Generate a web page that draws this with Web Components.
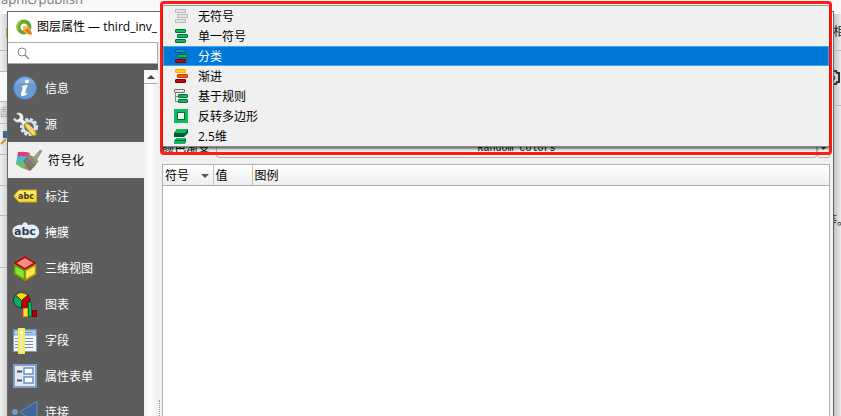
<!DOCTYPE html>
<html lang="zh-CN">
<head>
<meta charset="utf-8">
<title>图层属性</title>
<style>
  html, body { margin: 0; height: 100%; }
  body {
    overflow: hidden;
    font: 12px/20px "Open Sans", "Noto Sans CJK SC", sans-serif;
    color: #000;
  }
</style>
</head>
<body>
<desktop-scene>
  <backdrop-app slot="back"></backdrop-app>
  <dialog-window heading="图层属性 — third_inv_">
    <side-panel slot="side">
      <side-item icon="info">信息</side-item>
      <side-item icon="source">源</side-item>
      <side-item icon="brush" selected>符号化</side-item>
      <side-item icon="label">标注</side-item>
      <side-item icon="mask">掩膜</side-item>
      <side-item icon="cube">三维视图</side-item>
      <side-item icon="chart">图表</side-item>
      <side-item icon="fields">字段</side-item>
      <side-item icon="form">属性表单</side-item>
      <side-item icon="join">连接</side-item>
    </side-panel>
    <ramp-field></ramp-field>
    <symbol-table></symbol-table>
  </dialog-window>
  <renderer-menu slot="popup">
    <renderer-option icon="none">无符号</renderer-option>
    <renderer-option icon="single">单一符号</renderer-option>
    <renderer-option icon="category" selected>分类</renderer-option>
    <renderer-option icon="graduated">渐进</renderer-option>
    <renderer-option icon="rules">基于规则</renderer-option>
    <renderer-option icon="inverted">反转多边形</renderer-option>
    <renderer-option icon="extrude">2.5维</renderer-option>
  </renderer-menu>
</desktop-scene>

<script>
const bars = (a, b, c) => `
  <g stroke-width="1">
    <rect x="1.5" y="1.5" width="10" height="3" rx=".5" fill="${a[0]}" stroke="${a[1]}"/>
    <rect x="3.5" y="6.5" width="10" height="3" rx=".5" fill="${b[0]}" stroke="${b[1]}"/>
    <rect x="1.5" y="11.5" width="10" height="3" rx=".5" fill="${c[0]}" stroke="${c[1]}"/>
  </g>`;

const green = ['#0bbb5c', '#00703a'];

const menuIcons = {
  none: `<g fill="#e4e4e4" stroke="#888" stroke-dasharray="1 1">
      <rect x="1.5" y="1.5" width="10" height="3"/>
      <rect x="3.5" y="6.5" width="10" height="3"/>
      <rect x="1.5" y="11.5" width="10" height="3"/></g>`,
  single: bars(green, green, green),
  category: bars(['#00a4b8', '#0b50a8'], green, ['#b80d0d', '#760000']),
  graduated: bars(['#ffd800', '#ffa800'], ['#ff5a00', '#d93600'], ['#b80d0d', '#760000']),
  rules: `<path d="M1.5 5v9M1.5 8.5h3M1.5 13.5h3" stroke="#888" fill="none"/>
    <rect x=".5" y="1.5" width="10" height="3" rx=".5" fill="#e6e6e6" stroke="#777"/>
    <rect x="4.5" y="6.5" width="9" height="3" rx=".5" fill="#0bbb5c" stroke="#00703a"/>
    <rect x="4.5" y="11.5" width="9" height="3" rx=".5" fill="#0bbb5c" stroke="#00703a"/>`,
  inverted: `<path fill="#0bbb5c" d="M0 1h14v14H0z"/>
    <rect x="3.5" y="4.5" width="7" height="7" fill="#f6f6f6" stroke="#00703a"/>`,
  extrude: `<path fill="#00593a" d="M3 1h11v4l-4 4H0V5z"/><path fill="#0bbb5c" d="M3 1h11l-3 4H0z"/>
    <path fill="#00593a" d="M3 10h9v3l-1 3H0v-3z"/><path fill="#0bbb5c" d="M3 10h9l-1 2H1zM0 13h11v3H0z"/>`
};

const sideIcons = {
  info: `<circle cx="12" cy="12" r="11.5" fill="#6d9bd1" stroke="#4578b5"/>
    <path d="M2 9a10.5 10.5 0 0 1 20-1Q12 5 2 9z" fill="#83abd9"/>
    <circle cx="14" cy="5.5" r="2" fill="#fff"/>
    <path d="M8.5 10.5q3-2 6-1.5l-2.5 8q0 1 2-.5l.5 1q-3 3-5.5 2.5-1.5-.5-1-2.5l2-6q0-1-1.5 0z" fill="#fff"/>`,
  source: `<circle cx="16" cy="15" r="7.5" fill="none" stroke="#dce5ef" stroke-width="3" stroke-dasharray="3 1.5"/>
    <circle cx="16" cy="15" r="6" fill="#626970" stroke="#d4e0ee" stroke-width="2.5"/>
    <path d="M3 1.5q4-2 6.500 1 1.500 3 .500 5l5 5-2.500 2.500-5-5Q4 11.500.500 8L1 6l3.500 2L7 5.500 6 3z" fill="#f2f2ee" stroke="#aaa" stroke-width=".5"/>
    <path d="M11 13l3-2.500 9 10v3h-4z" fill="#f3ce4d" stroke="#a98419"/>
    <path d="M14 14l6.500 7.500M16 13l5.500 6" stroke="#fff0a5"/>`,
  brush: `<path d="M2 4q6-1 12 1l-2 6H1z" fill="#d6407c"/>
    <path d="M1 9q5-2 10 0v7H0z" fill="#4fb4d8"/>
    <path d="M0 14q5-1 9 0l5 8q-7 0-14-6z" fill="#6cc06a"/>
    <path d="M8 19l5 4 3-3-4-3z" fill="#c4705f"/>
    <path d="M7 13l4-4 10 4-1 4-6 6z" fill="#77746a"/>
    <path d="M10 12l7 7M13 11l6 6" stroke="#94917f"/>
    <path d="M10 9l3-3 8 8-2 3z" fill="#8d8a7a"/>
    <path d="M15 8l3 1 6-7 2 1-5 8 1 3-2 1z" fill="#a09b86" stroke="#7a7768" stroke-width=".5"/>`,
  label: `<path d="M.7 12L6 6h17.500v12H6z" fill="#f6dc37" stroke="#d3ac0b"/>
    <path d="M2 11l4-4h17v4z" fill="#fff08b" opacity=".7"/>
    <text x="5" y="15" font-family="DejaVu Sans" font-size="8" font-weight="700" fill="#3f3d25">abc</text>`,
  mask: `<path d="M3 6q3-2 6-1 1-4 5-2l1 2q7-2 10 3 3 5-1 9-3 2-6 1-8 1-10-1-6 1-8-3-2-6 3-8z" fill="#e4edfb"/>
    <text x="1" y="15" font-family="DejaVu Sans" font-size="11" font-weight="700" fill="#34404c">abc</text>`,
  cube: `<path d="M1 7l11-6.500L23 7v12l-11 6.500L1 19z" fill="#7b6a05"/>
    <path d="M2 7l10-6 10 6-10 6z" fill="#f78b8b" stroke="#b50000" stroke-width="1.500"/>
    <path d="M1.500 9l10 5.500v9.500l-10-6z" fill="#8ce233" stroke="#4b9b0a" stroke-width="1.500"/>
    <path d="M22.500 9l-10 5.500v9.500l10-6z" fill="#fce94f" stroke="#b19508" stroke-width="1.500"/>`,
  chart: `<g stroke="#333" stroke-width="1">
    <path d="M8.5 8.500L2.500 3q-5 7 1 11 2 2 5 2z" fill="#09af57"/>
    <path d="M8.500 8.500L15 3q5 6-1 12-3 2-5.500 1z" fill="#b80000"/>
    <path d="M8.500 8.500L2.500 3Q8-2 15 3z" fill="#ffda00"/></g>
    <path d="M10.500 16.500h4v8h-4z" fill="#ffd92b" stroke="#ff9d00"/>
    <path d="M15.500 10.500h3v14h-3z" fill="#0bbb5c" stroke="#006d3a"/>
    <path d="M19.500 18.500h4v6h-4z" fill="#b80000" stroke="#760000"/>`,
  fields: `<path d="M.5 1.500h23v22H.5z" fill="#f5f5f5" stroke="#7d9cc3"/>
    <path d="M1 2h22v5H1z" fill="#b1d3f2" stroke="#557fae" stroke-width=".7"/>
    <path d="M11 4.500h9M2 10.500h18M2 13.500h18M2 16.500h18M2 19.500h18" stroke="#6e91bd"/>
    <path d="M6 1h5v24H6z" fill="#eee7b8" stroke="#f8ed45" stroke-width="2"/>
    <circle cx="8.500" cy="4.500" r="1.500" fill="#fff"/>`,
  form: `<path d="M1 1h22v22H1z" fill="#e4e8ee" stroke="#7d9fc9" stroke-width="2"/>
    <path d="M4 7.500h5M4 16.500h5" stroke="#43556b" stroke-width="2"/>
    <rect x="11" y="4" width="9" height="6" fill="#fff" stroke="#6690c2" stroke-width="1.500"/>
    <rect x="11" y="13" width="9" height="6" fill="#fff" stroke="#6690c2" stroke-width="1.500"/>`,
  join: `<circle cx="2" cy="12" r="3" fill="#6d9bd1"/><path d="M7 12L24 1v24z" fill="#3c6796" stroke="#628fc1"/>`
};

class DesktopScene extends HTMLElement {
  constructor() {
    super();
    this.attachShadow({ mode: 'open' }).innerHTML = `
      <style>
        :host {
          display: flex;
          position: relative;
          height: 100vh;
          overflow: hidden;
          box-sizing: border-box;
          padding: 11px 7px 0;
        }
        ::slotted([slot=back]) { position: absolute; inset: 0; }
        ::slotted([slot=popup]) { position: absolute; top: 1px; left: 160px; right: 9px; }
      </style>
      <slot name="back"></slot>
      <slot></slot>
      <slot name="popup"></slot>
    `;
  }
}

class BackdropApp extends HTMLElement {
  constructor() {
    super();
    this.attachShadow({ mode: 'open' }).innerHTML = `
      <style>
        :host { display: flex; justify-content: space-between; background: #f8f8f8; color: #777; }
        .path { position: absolute; top: -11px; left: 1px; font-size: 13px; }
        .strip { width: 8px; margin-top: 14px; overflow: hidden; }
        .strip div { box-sizing: border-box; border-bottom: 1px solid #b8b8b8; }
        .left { background: linear-gradient(90deg, #f0f0f0, #cfcfcf); }
        .right { background: linear-gradient(90deg, #bdbdbd, #ebebeb); color: #222; }
        .piece { position: absolute; }
        .dim { color: #aaa; }
        .dark { color: #222; }
        svg { display: block; }
      </style>
      <div class="path">aphic/publish</div>
      <div class="strip left">
        <div style="height:37px"></div>
        <div style="height:21px"></div>
        <div style="height:30px;background:#fafafa"></div>
        <div style="height:22px"></div>
        <div style="height:31px"></div>
        <div style="height:31px"></div>
        <div style="height:30px"></div>
        <div style="height:52px"></div>
      </div>
      <div class="strip right">
        <div style="height:37px"></div>
        <div style="height:55px"></div>
      </div>
      <span class="piece dim" style="left:-4px;top:103px">插</span>
      <svg class="piece" style="left:0;top:26px" width="8" height="14"><path d="M6 2h2v10H6z" fill="#cda533"/></svg>
      <svg class="piece" style="left:0;top:130px" width="8" height="18"><path d="M3 1h5v7H3z" fill="#316a9c"/><path d="M1 14l5-5" stroke="#c79425" stroke-width="2"/></svg>
      <svg class="piece" style="right:0;top:69px" width="8" height="18"><path d="M0 2h3l1 2h2v9H4l-1 2H0M0 7q2 2 0 4" fill="none" stroke="#333" stroke-width="2"/></svg>
      <span class="piece dark" style="right:-4px;top:22px">相</span>
      <span class="piece dark" style="right:-8px;top:211px">等。</span>
    `;
  }
}

class DialogWindow extends HTMLElement {
  constructor() {
    super();
    this.attachShadow({ mode: 'open' });
  }

  connectedCallback() {
    this.shadowRoot.innerHTML = `
      <style>
        :host {
          display: flex;
          flex: 1;
          flex-direction: column;
          position: relative;
          min-width: 0;
          background: #f0f0f0;
          border: 1px solid #666;
          border-bottom: 0;
        }
        header {
          display: flex;
          align-items: center;
          gap: 4px;
          height: 30px;
          padding-left: 8px;
          background: #fff;
        }
        .body { display: flex; flex: 1; min-height: 0; }
        .split {
          display: flex;
          flex-direction: column;
          justify-content: flex-end;
          width: 4px;
        }
        .split i { height: 16px; margin: 0 1px; border-left: 1px dotted #999; }
        main {
          display: flex;
          flex: 1;
          flex-direction: column;
          min-width: 0;
          padding: 96px 3px 0 0;
        }
      </style>
      <header>
        <svg width="17" height="17" viewBox="0 0 17 17">
          <circle cx="8" cy="8" r="5.500" fill="none" stroke="#67a52c" stroke-width="4"/>
          <path d="M2 11A6.500 6.500 0 0 1 5 2" fill="none" stroke="#98c73d" stroke-width="2"/>
          <path d="M7 7h4l5 6v3h-3L7 11z" fill="#ee7913" stroke="#fff" stroke-width=".7"/>
          <path d="M7 7h3l2 2-3 2-2-1z" fill="#f8c431"/>
        </svg>
        <span>${this.getAttribute('heading')}</span>
      </header>
      <div class="body">
        <slot name="side"></slot>
        <div class="split"><i></i></div>
        <main><slot></slot></main>
      </div>
    `;
  }
}

class SidePanel extends HTMLElement {
  constructor() {
    super();
    this.attachShadow({ mode: 'open' }).innerHTML = `
      <style>
        :host { display: flex; flex-direction: column; width: 150px; background: #5d5d5d; }
        label { display: flex; position: relative; }
        label svg { position: absolute; left: 8px; top: 4px; }
        input {
          flex: 1;
          min-width: 0;
          height: 22px;
          box-sizing: border-box;
          padding: 0 4px 0 24px;
          border: 1px solid #aaa;
          border-left: 0;
          background: #fff;
          outline: none;
        }
        .scroll { display: flex; flex: 1; min-height: 0; padding-top: 6px; }
        nav { flex: 1; overflow: hidden; }
        .bar { width: 14px; background: linear-gradient(90deg, #efefef, #fff 40%, #eee); }
        .bar button {
          display: flex;
          align-items: center;
          justify-content: center;
          width: 100%;
          height: 14px;
          padding: 0;
          border: 0;
          border-bottom: 1px solid #aaa;
          background: #f8f8f8;
        }
      </style>
      <label>
        <svg width="14" height="14" fill="none" stroke="#888"><circle cx="6" cy="6" r="4"/><path d="M9 9l4 4" stroke-width="1.500"/></svg>
        <input type="search" aria-label="搜索">
      </label>
      <div class="scroll">
        <nav><slot></slot></nav>
        <div class="bar">
          <button aria-label="向上滚动"><svg width="8" height="4"><path d="M0 4l4-4 4 4z" fill="#444"/></svg></button>
        </div>
      </div>
    `;
  }
}

class SideItem extends HTMLElement {
  constructor() {
    super();
    this.attachShadow({ mode: 'open' });
  }

  connectedCallback() {
    this.shadowRoot.innerHTML = `
      <style>
        :host { display: block; color: #fff; }
        :host([selected]) { color: #000; background: #f0f0f0; }
        button {
          display: flex;
          align-items: center;
          gap: 8px;
          width: 100%;
          height: 36px;
          padding: 0 0 0 5px;
          border: 0;
          background: none;
          color: inherit;
          font: inherit;
          white-space: nowrap;
        }
        :host([selected]) button { padding-left: 8px; }
        svg { flex: none; overflow: visible; }
        span { padding-top: 2px; }
      </style>
      <button>
        <svg width="24" height="25" viewBox="0 0 24 25">${sideIcons[this.getAttribute('icon')]}</svg>
        <span><slot></slot></span>
      </button>
    `;
  }
}

class RampField extends HTMLElement {
  constructor() {
    super();
    this.attachShadow({ mode: 'open' }).innerHTML = `
      <style>
        :host { display: flex; height: 20px; margin-bottom: 6px; }
        label { width: 54px; }
        select {
          flex: 1;
          min-width: 0;
          appearance: none;
          border: 1px solid #b4b4b4;
          border-radius: 3px;
          background: #f2f2f2;
          color: #000;
          font: 10px "Liberation Mono", monospace;
          text-align: center;
          text-align-last: center;
        }
        button {
          width: 13px;
          padding: 0;
          border: 1px solid #b4b4b4;
          border-radius: 3px;
          background: #f2f2f2;
        }
        svg { display: block; margin: auto; }
      </style>
      <label for="ramp">颜色渐变</label>
      <select id="ramp"><option>Random colors</option></select>
      <button aria-label="色带菜单"><svg width="7" height="4"><path d="M0 0h7l-3.500 4z" fill="#444"/></svg></button>
    `;
  }
}

class SymbolTable extends HTMLElement {
  constructor() {
    super();
    this.attachShadow({ mode: 'open' }).innerHTML = `
      <style>
        :host { display: block; flex: 1; background: #fff; border: 1px solid #b0b0b0; border-bottom: 0; }
        table { width: 100%; border-collapse: collapse; table-layout: fixed; }
        th {
          height: 18px;
          padding: 2px 2px 0;
          border-right: 1px solid #c4c4c4;
          border-bottom: 1px solid #aaa;
          background: linear-gradient(#fff, #ededed);
          font-weight: 400;
          line-height: 18px;
          text-align: left;
        }
        th:last-child { border-right: 0; }
        div { display: flex; align-items: center; justify-content: space-between; padding-right: 2px; }
      </style>
      <table>
        <colgroup><col style="width:50px"><col style="width:39px"><col></colgroup>
        <thead>
          <tr>
            <th><div>符号 <svg width="8" height="4"><path d="M0 0h8l-4 4z" fill="#555"/></svg></div></th>
            <th>值</th>
            <th>图例</th>
          </tr>
        </thead>
      </table>
    `;
  }
}

class RendererMenu extends HTMLElement {
  constructor() {
    super();
    this.attachShadow({ mode: 'open' }).innerHTML = `
      <style>
        :host {
          display: block;
          height: 154px;
          box-sizing: border-box;
          border: 3px solid #ff1d12;
          border-radius: 4px;
        }
        .list {
          border-top: 1px solid #999;
          border-bottom: 1px solid #888;
          margin-top: 1px;
          background: #f0f0f0;
          box-shadow: 0 2px 2px #0008;
        }
      </style>
      <div class="list" role="listbox" aria-label="渲染器"><slot></slot></div>
    `;
  }
}

class RendererOption extends HTMLElement {
  constructor() {
    super();
    this.attachShadow({ mode: 'open' });
  }

  connectedCallback() {
    this.shadowRoot.innerHTML = `
      <style>
        :host { display: block; }
        button {
          display: flex;
          align-items: center;
          gap: 10px;
          width: 100%;
          height: 20px;
          padding: 0 10px;
          border: 1px solid transparent;
          background: none;
          color: inherit;
          font: inherit;
          line-height: 16px;
        }
        :host([selected]) button { color: #fff; background: #0078d7; border-color: #3fa5f5; }
        svg { flex: none; }
        span { padding-top: 2px; }
      </style>
      <button role="option" aria-selected="${this.hasAttribute('selected')}">
        <svg width="14" height="16" viewBox="0 0 14 16">${menuIcons[this.getAttribute('icon')]}</svg>
        <span><slot></slot></span>
      </button>
    `;
  }
}

customElements.define('desktop-scene', DesktopScene);
customElements.define('backdrop-app', BackdropApp);
customElements.define('dialog-window', DialogWindow);
customElements.define('side-panel', SidePanel);
customElements.define('side-item', SideItem);
customElements.define('ramp-field', RampField);
customElements.define('symbol-table', SymbolTable);
customElements.define('renderer-menu', RendererMenu);
customElements.define('renderer-option', RendererOption);
</script>
</body>
</html>
